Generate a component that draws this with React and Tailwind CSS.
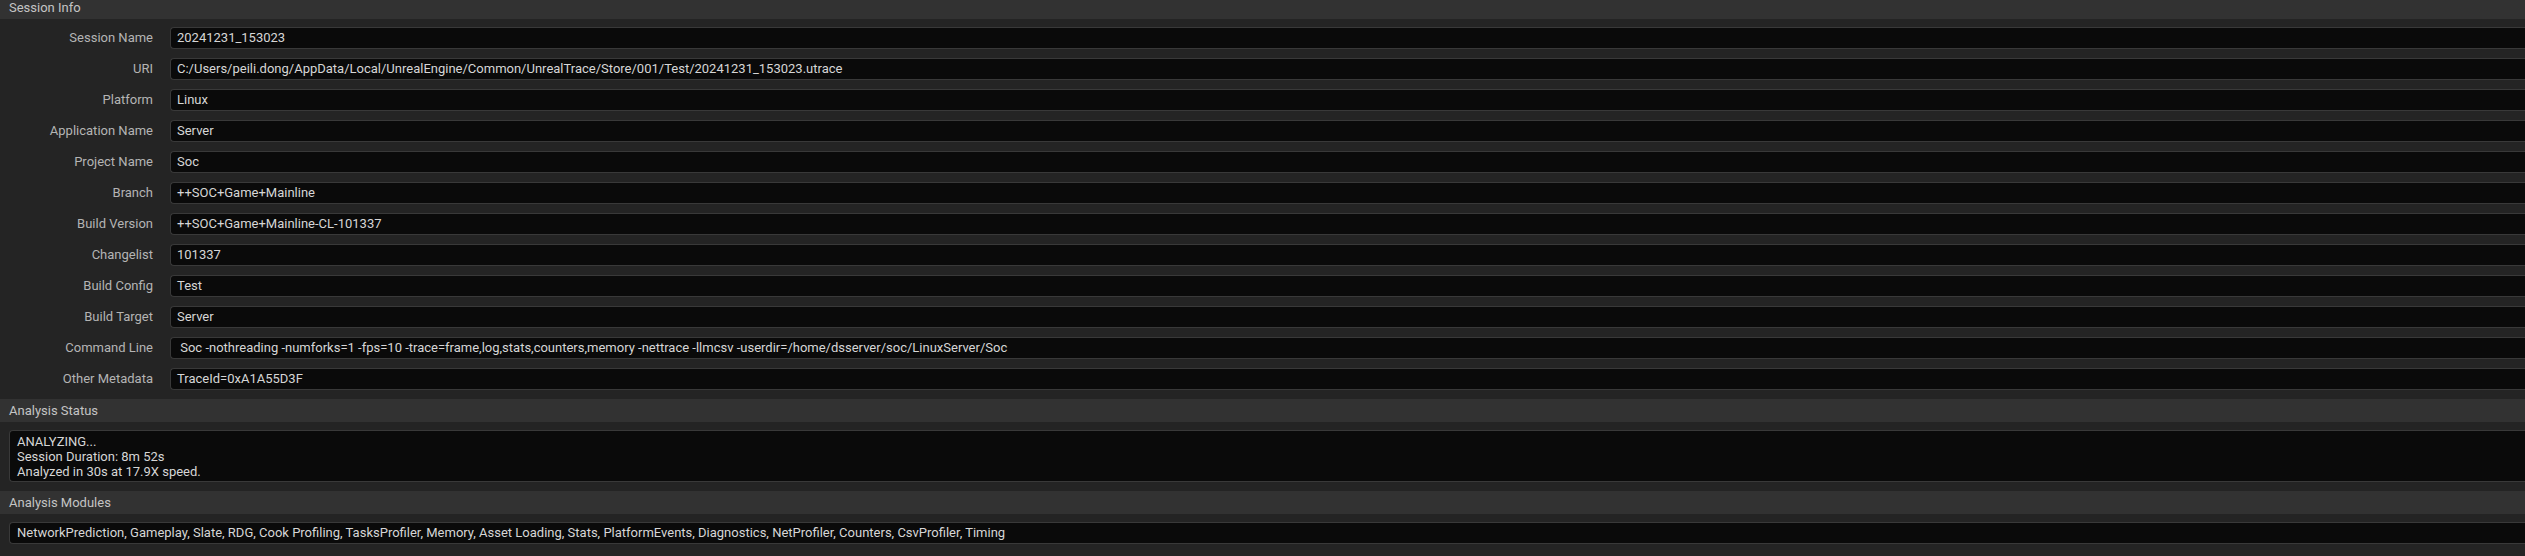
import React from 'react';

const sessionInfo = [
  ['Session Name', '20241231_153023'],
  ['URI', 'C:/Users/peili.dong/AppData/Local/UnrealEngine/Common/UnrealTrace/Store/001/Test/20241231_153023.utrace'],
  ['Platform', 'Linux'],
  ['Application Name', 'Server'],
  ['Project Name', 'Soc'],
  ['Branch', '++SOC+Game+Mainline'],
  ['Build Version', '++SOC+Game+Mainline-CL-101337'],
  ['Changelist', '101337'],
  ['Build Config', 'Test'],
  ['Build Target', 'Server'],
  ['Command Line', ' Soc -nothreading -numforks=1 -fps=10 -trace=frame,log,stats,counters,memory -nettrace -llmcsv -userdir=/home/dsserver/soc/LinuxServer/Soc'],
  ['Other Metadata', 'TraceId=0xA1A55D3F'],
];

const modules = 'NetworkPrediction, Gameplay, Slate, RDG, Cook Profiling, TasksProfiler, Memory, Asset Loading, Stats, PlatformEvents, Diagnostics, NetProfiler, Counters, CsvProfiler, Timing';

function SectionHeader({ title }) {
  return (
    <div className="h-[23px] bg-[#323232] flex items-center pl-[9px] text-[13px] text-[#c4c4c4]">
      {title}
    </div>
  );
}

function Field({ children, className = '' }) {
  return (
    <div className={`flex-1 min-w-0 bg-[#0a0a0a] border border-r-0 border-[#393939] rounded-l-[4px] text-[13px] text-[#d6d6d6] whitespace-pre overflow-hidden ${className}`}>
      {children}
    </div>
  );
}

export default function App() {
  return (
    <div className="w-[2525px] h-[556px] overflow-hidden bg-[#242424] font-['Roboto','Liberation_Sans',sans-serif]">
      <div className="-mt-[4px]">
        <SectionHeader title="Session Info" />
        <div className="flex flex-col gap-[9px] pt-[8px] pb-[9px]">
          {sessionInfo.map(([label, value]) => (
            <div key={label} className="flex items-center">
              <div className="w-[153px] shrink-0 text-right text-[13px] text-[#b4b4b4]">{label}</div>
              <div className="w-[17px] shrink-0" />
              <Field className="h-[22px] flex items-center pl-[6px]">{value}</Field>
            </div>
          ))}
        </div>

        <SectionHeader title="Analysis Status" />
        <div className="pt-[8px] pb-[9px] pl-[9px] flex">
          <Field className="h-[52px] pl-[7px] pt-[3px] leading-[15px]">
            <div>ANALYZING...</div>
            <div>Session Duration: 8m 52s</div>
            <div>Analyzed in 30s at 17.9X speed.</div>
          </Field>
        </div>

        <SectionHeader title="Analysis Modules" />
        <div className="pt-[8px] pl-[9px] flex">
          <Field className="h-[22px] flex items-center pl-[7px]">{modules}</Field>
        </div>
      </div>
    </div>
  );
}
